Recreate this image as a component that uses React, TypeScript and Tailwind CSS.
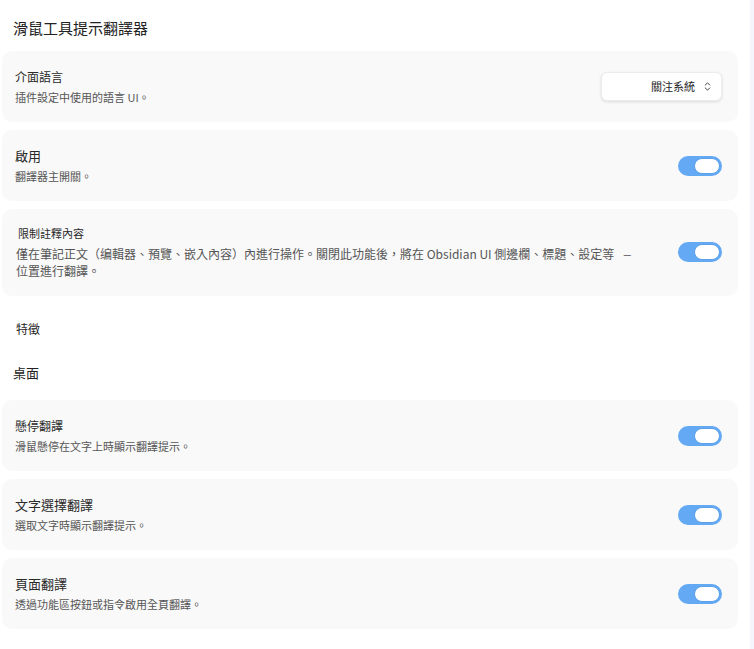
import { ChevronsUpDown } from 'lucide-react';

const font = { fontFamily: '"Noto Sans CJK TC", "Noto Sans", sans-serif' };

function Toggle() {
  return (
    <div className="w-[44px] h-[20px] rounded-full bg-[#63a9f4] p-[2px] flex justify-end shrink-0">
      <div className="w-[26px] h-[16px] rounded-full bg-white border border-[#5a9fe8]"></div>
    </div>
  );
}

function Row({
  title,
  desc,
  titleClass = 'text-[13px]',
  children,
}: {
  title: string;
  desc: string;
  titleClass?: string;
  children: React.ReactNode;
}) {
  return (
    <div className="bg-[#f9f9f9] rounded-[10px] pl-[13px] pr-[16px] py-[17px] flex items-center justify-between">
      <div className="flex flex-col">
        <div className={`${titleClass} leading-[18px] text-[#2a2a2a]`}>{title}</div>
        <div className="text-[11px] leading-[16px] mt-[3px] text-[#555]">{desc}</div>
      </div>
      {children}
    </div>
  );
}

export default function App() {
  return (
    <div className="flex bg-white min-h-[649px]" style={font}>
      <div className="w-[750px] pl-[2px] pr-[12px] pb-[20px]">
        <h1 className="text-[15px] leading-[22px] text-[#222] pl-[11px] pt-[17px] mb-[12px]">
          滑鼠工具提示翻譯器
        </h1>

        <div className="flex flex-col gap-[8px]">
          <Row title="介面語言" titleClass="text-[12px]" desc="插件設定中使用的語言 UI。">
            <div className="w-[121px] h-[29px] bg-white rounded-[6px] border border-[#ececec] shadow-[0_1px_3px_rgba(0,0,0,0.12)] flex items-center justify-end pr-[8px] gap-[7px]">
              <span className="text-[11px] text-[#222]">關注系統</span>
              <ChevronsUpDown size={11} strokeWidth={2} className="text-[#333]" />
            </div>
          </Row>

          <Row title="啟用" desc="翻譯器主開關。">
            <Toggle />
          </Row>

          <div className="bg-[#f9f9f9] rounded-[10px] pl-[14px] pr-[16px] pt-[16px] pb-[17px] flex items-center justify-between">
            <div className="flex flex-col">
              <div className="text-[11px] leading-[16px] text-[#2a2a2a] pl-[2px]">限制註釋內容</div>
              <div className="text-[12px] leading-[17px] mt-[4px] text-[#555]">
                <div>
                  僅在筆記正文（编輯器、預覽、嵌入內容）內進行操作。關閉此功能後，將在 Obsidian UI 側邊欄、標題、設定等
                  <span className="ml-[8px] inline-block scale-x-75">—</span>
                </div>
                <div>位置進行翻譯。</div>
              </div>
            </div>
            <Toggle />
          </div>
        </div>

        <div className="text-[12px] leading-[18px] text-[#222] pl-[14px] mt-[24px]">特徵</div>
        <div className="text-[13px] leading-[18px] text-[#222] pl-[11px] mt-[26px] mb-[18px]">桌面</div>

        <div className="flex flex-col gap-[8px]">
          <Row title="懸停翻譯" titleClass="text-[12px]" desc="滑鼠懸停在文字上時顯示翻譯提示。">
            <Toggle />
          </Row>
          <Row title="文字選擇翻譯" desc="選取文字時顯示翻譯提示。">
            <Toggle />
          </Row>
          <Row title="頁面翻譯" desc="透過功能區按鈕或指令啟用全頁翻譯。">
            <Toggle />
          </Row>
        </div>
      </div>
      <div className="w-[4px] bg-[#f5f6fd]"></div>
    </div>
  );
}
